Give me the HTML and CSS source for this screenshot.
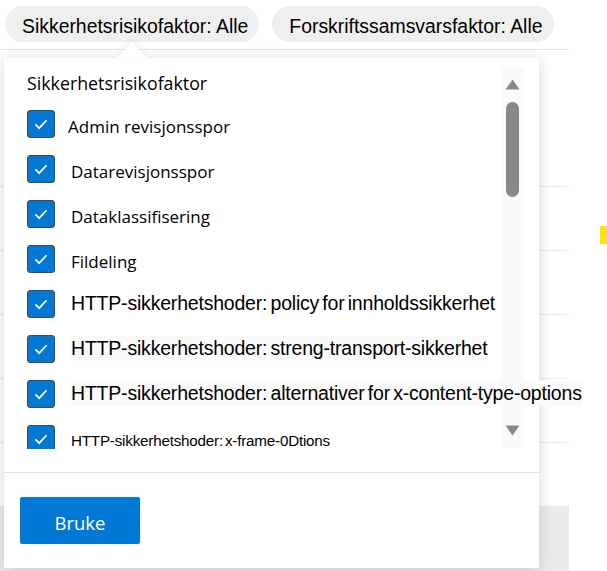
FILE: index.html
```html
<!DOCTYPE html>
<html lang="no">
<head>
    <meta charset="UTF-8">
    <meta name="viewport" content="width=device-width, initial-scale=1.0">
    <title>Sikkerhetsrisikofaktor</title>
    <link rel="stylesheet" href="styles.css">
</head>
<body>
    <div class="page">
        <div class="filters">
            <button class="pill">Sikkerhetsrisikofaktor: Alle</button>
            <button class="pill">Forskriftssamsvarsfaktor: Alle</button>
        </div>

        <div class="grid">
            <div class="grid-head"></div>
            <div class="grid-row"></div>
            <div class="grid-row"></div>
            <div class="grid-row"></div>
            <div class="grid-row"></div>
            <div class="grid-row last"></div>
            <div class="grid-foot"></div>
        </div>

        <div class="dropdown">
            <div class="dropdown-body">
                <div class="options">
                    <div class="options-title">Sikkerhetsrisikofaktor</div>
                    <ul class="option-list">
                        <li class="option">
                            <span class="check"><svg viewBox="0 0 28 28"><polyline points="8,14.5 12,18.5 20,10"/></svg></span>
                            <span class="label first">Admin revisjonsspor</span>
                        </li>
                        <li class="option">
                            <span class="check"><svg viewBox="0 0 28 28"><polyline points="8,14.5 12,18.5 20,10"/></svg></span>
                            <span class="label">Datarevisjonsspor</span>
                        </li>
                        <li class="option">
                            <span class="check"><svg viewBox="0 0 28 28"><polyline points="8,14.5 12,18.5 20,10"/></svg></span>
                            <span class="label">Dataklassifisering</span>
                        </li>
                        <li class="option">
                            <span class="check"><svg viewBox="0 0 28 28"><polyline points="8,14.5 12,18.5 20,10"/></svg></span>
                            <span class="label">Fildeling</span>
                        </li>
                        <li class="option">
                            <span class="check"><svg viewBox="0 0 28 28"><polyline points="8,14.5 12,18.5 20,10"/></svg></span>
                            <span class="label http">HTTP-sikkerhetshoder: policy for innholdssikkerhet</span>
                        </li>
                        <li class="option">
                            <span class="check"><svg viewBox="0 0 28 28"><polyline points="8,14.5 12,18.5 20,10"/></svg></span>
                            <span class="label http shaded">HTTP-sikkerhetshoder: streng-transport-sikkerhet</span>
                        </li>
                        <li class="option">
                            <span class="check"><svg viewBox="0 0 28 28"><polyline points="8,14.5 12,18.5 20,10"/></svg></span>
                            <span class="label http shaded">HTTP-sikkerhetshoder: alternativer for x-content-type-options</span>
                        </li>
                        <li class="option">
                            <span class="check"><svg viewBox="0 0 28 28"><polyline points="8,14.5 12,18.5 20,10"/></svg></span>
                            <span class="label http small">HTTP-sikkerhetshoder: x-frame-0Dtions</span>
                        </li>
                    </ul>
                </div>
                <div class="scrollbar">
                    <svg class="arrow" viewBox="0 0 15 11"><path d="M7.5 0.5 L14.5 10.5 L0.5 10.5 Z"/></svg>
                    <div class="thumb"></div>
                    <div class="track-space"></div>
                    <svg class="arrow" viewBox="0 0 15 11"><path d="M0.5 0.5 L14.5 0.5 L7.5 10.5 Z"/></svg>
                </div>
            </div>
            <div class="dropdown-footer">
                <button class="apply">Bruke</button>
            </div>
        </div>

        <span class="marker"></span>
    </div>
</body>
</html>
```

FILE: styles.css
```css
body {
    margin: 0;
    font-family: "Liberation Sans", Arial, sans-serif;
    background: #fff;
    color: #000;
}
.page {
    position: relative;
    width: 569px;
    height: 571px;
}
.filters {
    display: flex;
    gap: 13px;
    padding: 6px 0 0 5px;
    height: 43px;
    border-bottom: 1px solid #e3e3e3;
}
.pill {
    height: 36px;
    padding: 5px 11px 0 17px;
    border: none;
    border-radius: 18px;
    background: #efefef;
    font-family: "Liberation Sans", Arial, sans-serif;
    font-size: 19.4px;
    color: #000;
}
.grid-head {
    height: 136px;
    border-bottom: 1px solid #ebebeb;
}
.grid-row {
    height: 63px;
    border-bottom: 1px solid #ebebeb;
}
.grid-foot {
    height: 65px;
    background: #ebebeb;
}

/* filter dropdown */
.dropdown {
    position: absolute;
    left: 4px;
    top: 58px;
    width: 535px;
    height: 510px;
    background: #fff;
    box-shadow: 0 2px 14px rgba(0, 0, 0, 0.16);
}
.dropdown::before {
    content: "";
    position: absolute;
    left: 112px;
    top: -16px;
    border-left: 16px solid transparent;
    border-right: 16px solid transparent;
    border-bottom: 16px solid #fff;
    filter: drop-shadow(0 -2px 3px rgba(0, 0, 0, 0.06));
}
.dropdown-body {
    display: flex;
    height: 405px;
    padding-top: 9px;
}
.options {
    position: relative;
    z-index: 1;
    flex: 1;
    min-width: 0;
    padding-left: 23px;
    font-family: "Open Sans", "Noto Sans", sans-serif;
}
.options-title {
    margin-top: 4px;
    font-size: 17.8px;
    line-height: 24px;
}
.option-list {
    list-style: none;
    margin: 6px 0 0;
    padding: 0;
    height: 348px;
    overflow-x: visible;
    overflow-y: clip;
}
.option {
    display: flex;
    align-items: center;
    height: 45px;
    white-space: nowrap;
}
.check {
    flex: none;
    width: 26px;
    height: 26px;
    border: 1px solid #4a4a4a;
    border-radius: 3px;
    background: #0078d4;
}
.check svg {
    display: block;
    width: 26px;
    height: 26px;
    fill: none;
    stroke: #fff;
    stroke-width: 1.8;
}
.label {
    margin-left: 16px;
    padding: 5px 0 0;
    font-size: 17px;
}
.label.first {
    margin-left: 13px;
}
.label.http {
    font-family: "Liberation Sans", Arial, sans-serif;
    font-size: 19.5px;
    letter-spacing: -0.2px;
    word-spacing: -2px;
    padding: 1px 0;
}
.label.shaded {
    background: #fafafa;
}
.label.small {
    font-size: 15.2px;
    padding-top: 5px;
    word-spacing: -2px;
}
.scrollbar {
    flex: none;
    display: flex;
    flex-direction: column;
    align-items: center;
    width: 23px;
    height: 381px;
    margin-right: 15px;
    background: #fafafa;
}
.arrow {
    width: 15px;
    height: 11px;
    margin: 12px 0;
    fill: #888;
}
.thumb {
    width: 13px;
    height: 95px;
    border-radius: 7px;
    background: #888;
}
.track-space {
    flex: 1;
}
.dropdown-footer {
    border-top: 1px solid #e1e1e1;
    padding: 24px 0 0 16px;
}
.apply {
    width: 120px;
    height: 47px;
    padding-top: 5px;
    border: none;
    border-radius: 2px;
    background: #0078d4;
    color: #fff;
    font-family: "Open Sans", "Noto Sans", sans-serif;
    font-size: 18.5px;
}
.marker {
    position: absolute;
    left: 600px;
    top: 226px;
    width: 7px;
    height: 18px;
    background: #ffe500;
}
```
